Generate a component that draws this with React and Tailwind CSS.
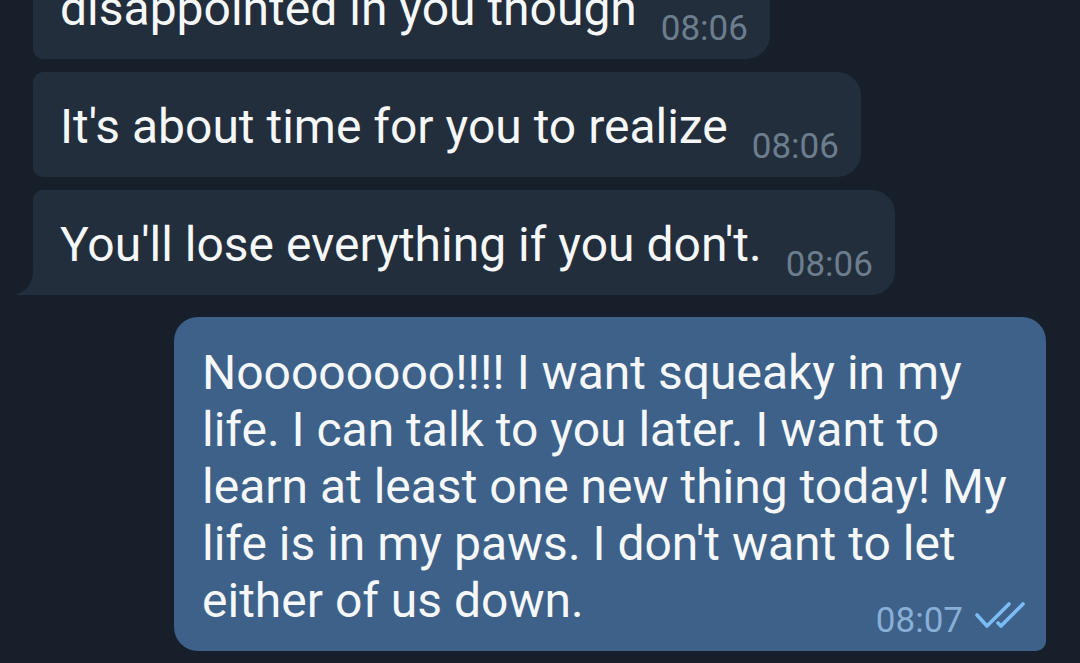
const incoming = [
  { text: 'disappointed in you though', time: '08:06', cls: 'rounded-tl-[10px] rounded-bl-[10px]' },
  { text: "It's about time for you to realize", time: '08:06', cls: 'rounded-tl-[10px] rounded-bl-[10px]' },
  { text: "You'll lose everything if you don't.", time: '08:06', cls: 'rounded-tl-[10px] rounded-bl-none', tail: true },
];

const outLines = [
  'Noooooooo!!!! I want squeaky in my',
  'life. I can talk to you later. I want to',
  'learn at least one new thing today! My',
  "life is in my paws. I don't want to let",
  'either of us down.',
];

function Tail() {
  return (
    <svg
      className="absolute bottom-0 left-[-17px]"
      width="18"
      height="30"
      viewBox="0 0 18 30"
    >
      <path d="M18 0 C18 16 12 26 1.5 29 Q0 29.6 1 30 L18 30 Z" fill="#232e3c" />
    </svg>
  );
}

function DoubleCheck() {
  return (
    <svg width="50" height="30" viewBox="0 0 50 30" className="ml-[12px] mb-[8px]" fill="none">
      <path d="M2 14 L12 25 L34 3" stroke="#7cbcf5" strokeWidth="3.6" strokeLinecap="round" strokeLinejoin="round" />
      <path d="M23 22 L26 25 L48 3" stroke="#7cbcf5" strokeWidth="3.6" strokeLinecap="round" strokeLinejoin="round" />
    </svg>
  );
}

export default function App() {
  return (
    <div
      className="flex h-[663px] w-[1080px] flex-col overflow-hidden bg-[#17202a] text-[48px] leading-[57px] text-[#f5f7f9]"
      style={{ fontFamily: 'Roboto, "Liberation Sans", sans-serif' }}
    >
      <div className="mt-[-46px] flex flex-col items-start gap-[13px] pl-[33px]">
        {incoming.map((m, i) => (
          <div
            key={i}
            className={`relative flex items-end rounded-[24px] bg-[#232e3c] pb-[12px] pl-[27px] pr-[22px] pt-[26px] ${m.cls}`}
          >
            <span className="mb-[10px] whitespace-nowrap">{m.text}</span>
            <span className="ml-[24px] text-[35px] leading-[36px] text-[#6c7d8e]">{m.time}</span>
            {m.tail && <Tail />}
          </div>
        ))}
      </div>

      <div className="mt-[22px] flex justify-end pr-[34px]">
        <div className="w-[872px] rounded-[24px] rounded-br-[10px] bg-[#3d6189] pb-[12px] pl-[28px] pr-[21px] pt-[27px]">
          {outLines.slice(0, 4).map((l, i) => (
            <div key={i} className="whitespace-nowrap">{l}</div>
          ))}
          <div className="flex items-end justify-between">
            <span className="mb-[10px] whitespace-nowrap">{outLines[4]}</span>
            <span className="flex items-end">
              <span className="text-[35px] leading-[36px] text-[#88afd6]">08:07</span>
              <DoubleCheck />
            </span>
          </div>
        </div>
      </div>
    </div>
  );
}
